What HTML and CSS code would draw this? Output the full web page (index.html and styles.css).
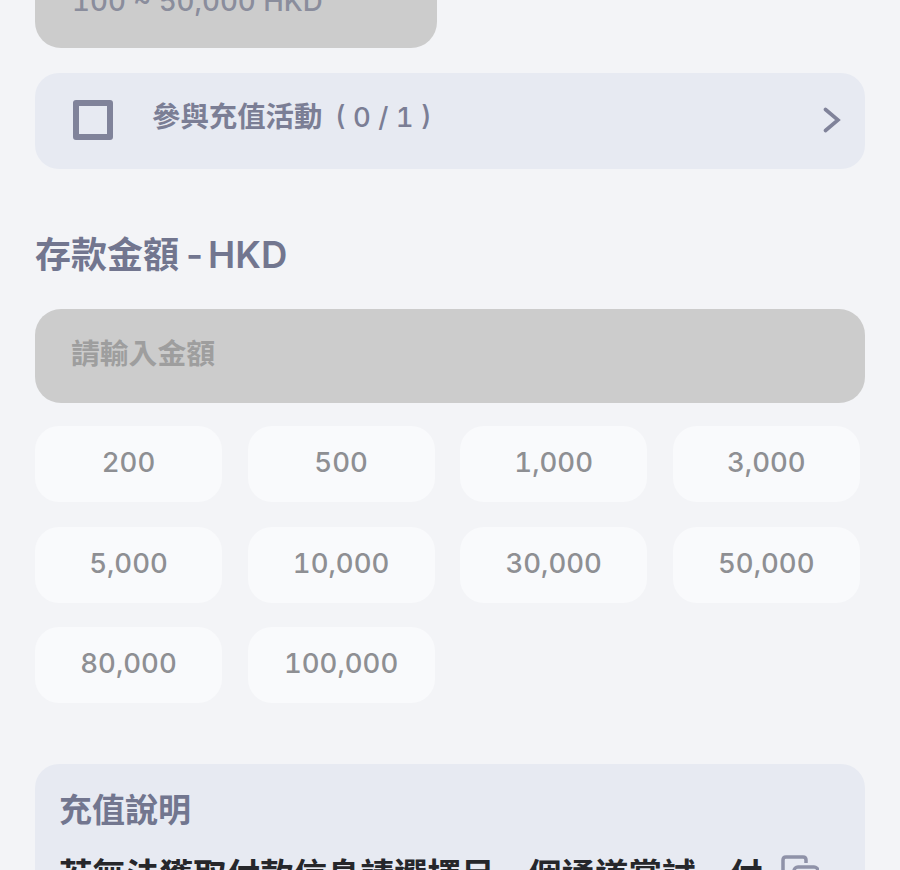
FILE: index.html
```html
<!DOCTYPE html>
<html lang="zh-Hant">
<head>
<meta charset="utf-8">
<title>存款</title>
<link rel="stylesheet" href="styles.css">
</head>
<body>
<main class="page">
  <div class="limit">100 ~ 50,000 HKD</div>
  <div class="promo">
    <span class="check"></span>
    <span class="promo-text">參與充值活動 <span class="promo-count">( 0 / 1 )</span></span>
    <svg class="chevron" viewBox="0 0 18 26" width="18" height="26"><path d="M2.5 2.5 L15 13 L2.5 23.5" fill="none" stroke="#80839a" stroke-width="3.6" stroke-linecap="round" stroke-linejoin="miter"/></svg>
  </div>
  <h2 class="title">存款金額 <span class="title-latin">- HKD</span></h2>
  <div class="amount">請輸入金額</div>
  <div class="chips">
    <button class="chip">200</button>
    <button class="chip">500</button>
    <button class="chip">1,000</button>
    <button class="chip">3,000</button>
    <button class="chip">5,000</button>
    <button class="chip">10,000</button>
    <button class="chip">30,000</button>
    <button class="chip">50,000</button>
    <button class="chip">80,000</button>
    <button class="chip">100,000</button>
  </div>
  <section class="notes">
    <h3 class="notes-title">充值說明</h3>
    <div class="note-row">
      <p class="note-text">若無法獲取付款信息請選擇另一個通道嘗試<span class="comma" lang="zh-Hans">，</span>付</p>
      <svg class="copy" viewBox="0 0 38 38" width="38" height="38"><path d="M8 26 H5 Q2 26 2 23 V5 Q2 2 5 2 H22 Q25 2 25 5 V8" fill="none" stroke="#8f92a8" stroke-width="3.5"/><rect x="13" y="12" width="24" height="24" rx="4" fill="none" stroke="#8f92a8" stroke-width="3.5"/></svg>
    </div>
  </section>
</main>
</body>
</html>
```
FILE: styles.css
```css
* { box-sizing: border-box; }
html, body { margin: 0; height: 870px; overflow: hidden; background: #f3f4f7; }
body { font-family: Inter, "Noto Sans CJK TC", sans-serif; font-variant-numeric: tabular-nums; }
.page { padding: 0 35px; margin-top: -32px; }
.limit { width: 402px; height: 80px; background: #cccccc; border-radius: 0 0 26px 26px; padding: 13px 37px 0; font-size: 27.7px; line-height: 40px; font-weight: 500; color: #8a8d9c; }
.promo { display: flex; align-items: center; height: 96px; margin-top: 25px; padding: 0 24px 0 38px; background: #e7eaf2; border-radius: 24px; }
.check { width: 40px; height: 40px; border: 6px solid #80839a; border-radius: 3px; flex: none; margin-top: -2px; }
.promo-text { flex: 1; margin-left: 39px; margin-top: -8px; font-size: 28.4px; font-weight: 600; color: #7b7e95; line-height: 40px; }
.promo-count { font-size: 27.5px; font-weight: 500; margin-left: 5px; }
.chevron { flex: none; margin-top: -2px; }
.title { margin: 61px 0 0; font-size: 36px; line-height: 50px; font-weight: 600; color: #72768f; }
.title-latin { margin-left: -6px; word-spacing: -8px; font-size: 36.5px; }
.amount { height: 94px; margin-top: 29px; padding: 0 36px; background: #cccccc; border-radius: 26px; font-size: 28.8px; font-weight: 600; line-height: 90px; color: #9e9e9e; }
.chips { display: grid; grid-template-columns: repeat(4, 187px); column-gap: 25.6px; row-gap: 24.5px; margin-top: 23px; }
.chip { height: 76px; padding: 0 0 4px; border: 0; background: #f9fafc; border-radius: 24px; font-family: inherit; font-size: 27.5px; font-weight: 500; font-variant-numeric: tabular-nums; color: #8e8f93; }
.notes { margin-top: 61px; height: 200px; padding: 23px 24px 0; background: #e7eaf2; border-radius: 24px 24px 0 0; }
.notes-title { margin: 0; font-size: 33px; line-height: 46px; font-weight: 600; color: #72768f; }
.note-row { display: flex; margin-top: 16px; align-items: flex-start; }
.note-text { margin: 0; width: 722px; font-size: 33.5px; line-height: 48px; font-weight: 700; color: #26272b; flex: none; }
.comma { font-family: "Noto Sans CJK SC", sans-serif; }
.copy { flex: none; margin-top: 6px; }
```
